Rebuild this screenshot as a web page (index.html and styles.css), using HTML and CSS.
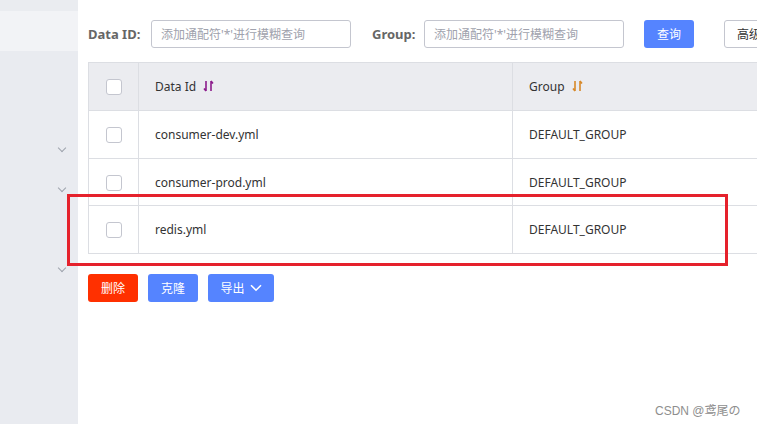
FILE: index.html
```html
<!DOCTYPE html>
<html lang="zh-CN">
<head>
    <meta charset="UTF-8">
    <title>配置列表</title>
    <link rel="stylesheet" href="styles.css">
</head>
<body>
    <div class="page">
        <div class="sidebar">
            <div class="side-top"></div>
            <div class="side-active"></div>
            <span class="chev chev-1"></span>
            <span class="chev chev-2"></span>
            <span class="chev chev-3"></span>
        </div>

        <div class="main">
            <div class="search-row">
                <label class="search-label">Data ID:</label>
                <input class="search-input" type="text" placeholder="添加通配符'*'进行模糊查询">
                <label class="search-label group-label">Group:</label>
                <input class="search-input" type="text" placeholder="添加通配符'*'进行模糊查询">
                <button class="btn btn-primary btn-query">查询</button>
                <button class="btn btn-normal btn-advanced">高级</button>
            </div>

            <div class="table-wrap">
                <table class="config-table">
                    <colgroup>
                        <col class="col-check">
                        <col class="col-id">
                        <col class="col-group">
                    </colgroup>
                    <thead>
                        <tr>
                            <th class="cell-check"><span class="checkbox"></span></th>
                            <th>Data Id <span class="sort sort-purple"><svg width="11" height="12" viewBox="0 0 11 12"><path d="M3 1v10M1 8.5l2 2.5M8 1v10M8 1l2 2.5" fill="none" stroke="currentColor" stroke-width="1.6"/></svg></span></th>
                            <th>Group <span class="sort sort-orange"><svg width="11" height="12" viewBox="0 0 11 12"><path d="M3 1v10M1 8.5l2 2.5M8 1v10M8 1l2 2.5" fill="none" stroke="currentColor" stroke-width="1.6"/></svg></span></th>
                        </tr>
                    </thead>
                    <tbody>
                        <tr>
                            <td class="cell-check"><span class="checkbox"></span></td>
                            <td>consumer-dev.yml</td>
                            <td>DEFAULT_GROUP</td>
                        </tr>
                        <tr>
                            <td class="cell-check"><span class="checkbox"></span></td>
                            <td>consumer-prod.yml</td>
                            <td>DEFAULT_GROUP</td>
                        </tr>
                        <tr>
                            <td class="cell-check"><span class="checkbox"></span></td>
                            <td>redis.yml</td>
                            <td>DEFAULT_GROUP</td>
                        </tr>
                    </tbody>
                </table>
            </div>

            <div class="actions">
                <button class="btn btn-danger">删除</button>
                <button class="btn btn-primary">克隆</button>
                <button class="btn btn-primary btn-export">导出 <svg width="12" height="8" viewBox="0 0 12 8"><path d="M1 1.2l5 5 5-5" fill="none" stroke="#fff" stroke-width="1.6"/></svg></button>
            </div>
        </div>

        <!-- annotation box drawn over the screenshot -->
        <div class="highlight"></div>
        <div class="watermark">CSDN @鸢尾の</div>
    </div>
</body>
</html>
```

FILE: styles.css
```css
body {
    margin: 0;
    font-family: "Noto Sans", "Noto Sans CJK SC", sans-serif;
    font-size: 12px;
    color: #333;
    background-color: #fff;
    overflow: hidden;
}
.page {
    position: relative;
    display: flex;
    width: 757px;
    height: 424px;
    overflow: hidden;
}
.sidebar {
    position: relative;
    flex: 0 0 78px;
    background-color: #e9ebf0;
}
.side-top {
    height: 11px;
    background-color: #eaecf0;
}
.side-active {
    height: 40px;
    background-color: #f2f3f6;
}
.chev {
    position: absolute;
    left: 59px;
    width: 5px;
    height: 5px;
    border-right: 1px solid #9ea3ad;
    border-bottom: 1px solid #9ea3ad;
    transform: rotate(45deg);
}
.chev-1 { top: 145px; }
.chev-2 { top: 185px; }
.chev-3 { top: 265px; }

.main {
    flex: 1;
    padding: 20px 0 0 10px;
    min-width: 0;
}
.search-row {
    display: flex;
    align-items: center;
    height: 28px;
    white-space: nowrap;
}
.search-label {
    flex-shrink: 0;
    width: 63px;
    font-size: 13px;
    font-weight: bold;
    color: #666;
}
.group-label {
    width: 52px;
    margin-left: 21px;
}
.search-input {
    flex-shrink: 0;
    box-sizing: border-box;
    width: 200px;
    height: 28px;
    padding: 0 9px;
    border: 1px solid #c4c6cf;
    border-radius: 3px;
    font-family: inherit;
    font-size: 12px;
    color: #333;
    outline: none;
}
.search-input::placeholder {
    color: #a0a2ad;
}
.btn {
    box-sizing: border-box;
    height: 28px;
    padding: 0 12px;
    border: 1px solid transparent;
    border-radius: 3px;
    font-family: inherit;
    font-size: 12px;
    color: #fff;
    cursor: pointer;
    flex-shrink: 0;
}
.btn-primary {
    background-color: #5584ff;
}
.btn-danger {
    background-color: #ff3000;
}
.btn-normal {
    background-color: #fff;
    border-color: #c4c6cf;
    color: #333;
}
.btn-query {
    width: 50px;
    margin-left: 20px;
}
.btn-advanced {
    margin-left: 30px;
    width: 60px;
    text-align: left;
}

.table-wrap {
    margin-top: 14px;
}
.config-table {
    width: 720px;
    border-collapse: collapse;
    table-layout: fixed;
}
.col-check { width: 50px; }
.col-id { width: 374px; }
.config-table th,
.config-table td {
    height: 47px;
    padding: 0 16px;
    border: 1px solid #dcdee3;
    text-align: left;
    font-size: 12px;
    font-weight: normal;
    color: #333;
}
.config-table th {
    background-color: #ebecf0;
}
.config-table tbody tr:nth-child(2) td {
    height: 46px;
}
.config-table .cell-check {
    padding: 0;
    text-align: center;
}
.checkbox {
    display: inline-block;
    box-sizing: border-box;
    width: 16px;
    height: 16px;
    border: 1px solid #c4c6cf;
    border-radius: 3px;
    background-color: #fff;
    vertical-align: middle;
}
.sort {
    display: inline-block;
    margin-left: 4px;
    vertical-align: -1px;
}
.sort-purple { color: #8c1c8c; }
.sort-orange { color: #d7892a; }

.actions {
    display: flex;
    gap: 10px;
    margin-top: 20px;
}
.actions .btn {
    width: 50px;
    padding: 0;
}
.actions .btn-export {
    width: 66px;
    display: flex;
    align-items: center;
    justify-content: center;
    gap: 5px;
}

.highlight {
    position: absolute;
    left: 67px;
    top: 194px;
    width: 655px;
    height: 66px;
    border: 3px solid #e5212c;
}
.watermark {
    position: absolute;
    left: 655px;
    top: 401px;
    font-size: 12px;
    color: #8e8e8e;
    font-family: "Liberation Sans", "Noto Sans CJK SC", sans-serif;
}
```
